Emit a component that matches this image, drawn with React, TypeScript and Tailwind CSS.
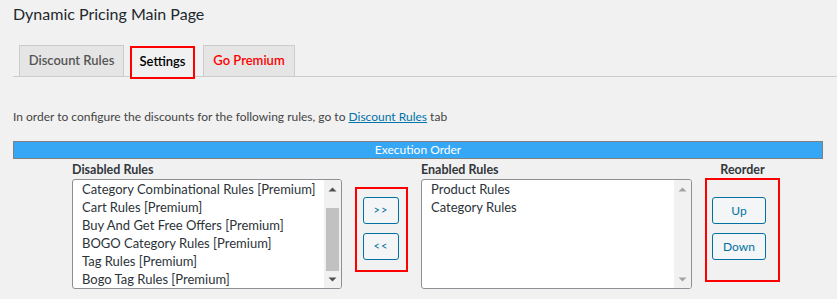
import React from "react";

const font = { fontFamily: 'Lato, "Open Sans", sans-serif' };

function Arrow({ up, pale }: { up?: boolean; pale?: boolean }) {
  return (
    <svg width="9" height="5" viewBox="0 0 9 5" className="block">
      <path
        d={up ? "M0.5 4.5 L4.5 0.5 L8.5 4.5 Z" : "M0.5 0.5 L4.5 4.5 L8.5 0.5 Z"}
        fill={pale ? "#a3a3a3" : "#505050"}
      />
    </svg>
  );
}

function ListBox({ items, scroll }: { items: string[]; scroll?: boolean }) {
  return (
    <div className="flex h-[110px] w-full overflow-hidden rounded-[3px] border border-[#8c8f94] bg-white">
      <div className="flex-1 overflow-hidden">
        {items.map((t) => (
          <div key={t} className="h-[18px] whitespace-nowrap pl-[9px] text-[13px] leading-[18px] text-[#2c3338]">
            {t}
          </div>
        ))}
      </div>
      <div className="flex w-[17px] flex-col items-center bg-[#f1f1f1]">
        <div className="flex h-[17px] items-center justify-center pt-[1px]">
          <Arrow up pale={!scroll} />
        </div>
        <div className="flex w-full flex-1 flex-col px-[2px]">
          {scroll ? <div className="mt-[11px] h-[63px] w-full bg-[#c1c1c1]" /> : null}
        </div>
        <div className="flex h-[17px] items-center justify-center pb-[1px]">
          <Arrow pale={!scroll} />
        </div>
      </div>
    </div>
  );
}

function Btn({ children, w }: { children: React.ReactNode; w: string }) {
  return (
    <div
      className={`${w} flex h-[27px] items-center justify-center rounded-[3px] border border-[#0071a1] bg-[#f3f5f6] text-[12px] text-[#0071a1]`}
    >
      {children}
    </div>
  );
}

export default function App() {
  return (
    <div className="h-[299px] w-[837px] overflow-hidden bg-[#f1f1f1] pl-[13px]" style={font}>
      <div className="pt-[4px] text-[16px] leading-[20px] text-[#23282d]">Dynamic Pricing Main Page</div>

      <div className="mt-[21px] flex h-[32px] items-start border-b border-[#cccccc]">
        <div className="ml-[6px] h-[31px] w-[105px] border border-b-0 border-[#cccccc] bg-[#e5e5e5] text-center text-[13px] font-semibold leading-[29px] text-[#555555]">
          Discount Rules
        </div>
        <div className="relative z-10 ml-[6px] mt-[1px] h-[33px] w-[65px] border-2 border-[#ff0000] bg-[#f1f1f1] text-center text-[13px] font-semibold leading-[27px] text-[#000000]">
          Settings
        </div>
        <div className="ml-[8px] h-[31px] w-[92px] border border-b-0 border-[#cccccc] bg-[#e5e5e5] text-center text-[13px] font-semibold leading-[29px] text-[#ff0000]">
          Go Premium
        </div>
      </div>

      <div className="mt-[31px] text-[12px] leading-[18px] text-[#444444]">
        In order to configure the discounts for the following rules, go to{" "}
        <span className="text-[#0073aa] underline">Discount Rules</span> tab
      </div>

      <div className="mt-[15px] h-[18px] w-[810px] border border-[#808080] bg-[#36a7f5] text-center text-[12px] leading-[16px] text-white">
        Execution Order
      </div>

      <div className="mt-[1px] flex items-start">
        <div className="ml-[59px] w-[270px]">
          <div className="h-[19px] text-[12.5px] font-bold leading-[19px] text-[#32373c]">Disabled Rules</div>
          <ListBox
            scroll
            items={[
              "Category Combinational Rules [Premium]",
              "Cart Rules [Premium]",
              "Buy And Get Free Offers [Premium]",
              "BOGO Category Rules [Premium]",
              "Tag Rules [Premium]",
              "Bogo Tag Rules [Premium]",
            ]}
          />
        </div>

        <div className="ml-[13px] mt-[27px] flex h-[85px] w-[53px] flex-col gap-[9px] border-2 border-[#ff0000] pl-[6px] pt-[8px]">
          <Btn w="w-[36px]">
            <span className="text-[11px] tracking-[1px]">&gt;&gt;</span>
          </Btn>
          <Btn w="w-[36px]">
            <span className="text-[11px] tracking-[1px]">&lt;&lt;</span>
          </Btn>
        </div>

        <div className="ml-[13px] w-[271px]">
          <div className="h-[19px] text-[12.5px] font-bold leading-[19px] text-[#32373c]">Enabled Rules</div>
          <ListBox items={["Product Rules", "Category Rules"]} />
        </div>

        <div className="ml-[13px] w-[75px]">
          <div className="h-[18px] text-center text-[12.5px] font-bold leading-[19px] text-[#32373c]">Reorder</div>
          <div className="flex h-[104px] w-[75px] flex-col gap-[9px] border-2 border-[#ff0000] pl-[5px] pt-[17px]">
            <Btn w="w-[54px]">Up</Btn>
            <Btn w="w-[54px]">Down</Btn>
          </div>
        </div>
      </div>
    </div>
  );
}
